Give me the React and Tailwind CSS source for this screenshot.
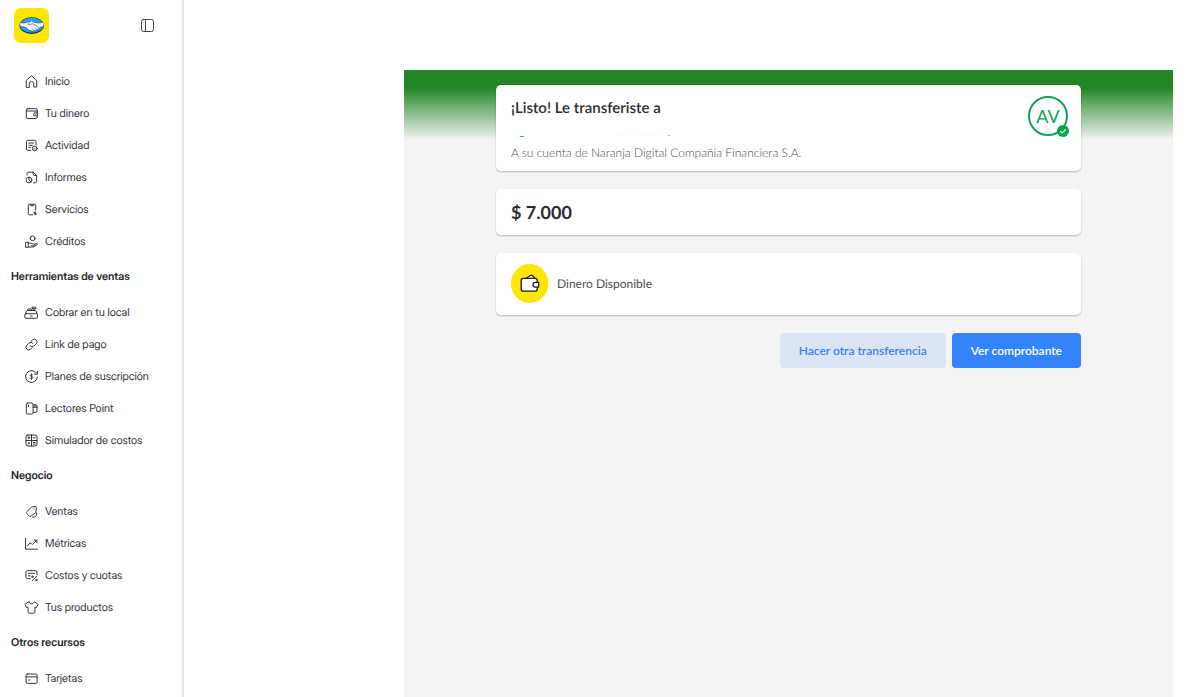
import React from 'react';

const Icon = ({ children }) => (
  <svg
    className="size-[15px] shrink-0"
    viewBox="0 0 15 15"
    fill="none"
    stroke="currentColor"
    strokeWidth="1"
    strokeLinecap="round"
    strokeLinejoin="round"
    aria-hidden="true"
  >
    {children}
  </svg>
);

const icons = {
  home: <path d="M2.3 13V6.4l5.200-4.600 5.200 4.600V13H9.7V9.700a2.200 2.200 0 0 0-4.400 0V13z" />,
  wallet: (
    <>
      <rect x="2.3" y="2.600" width="11" height="10" rx="1.600" />
      <path d="M2.300 5h11M13.300 6.900h-2.300a1.500 1.500 0 0 0 0 3h2.300" />
      <path d="M11.200 8.400h.1" />
    </>
  ),
  activity: (
    <>
      <path d="M12 6.800V3.600a1.300 1.300 0 0 0-1.300-1.300H3.800a1.300 1.300 0 0 0-1.300 1.300v7.500a1.300 1.300 0 0 0 1.300 1.300h3" />
      <path d="M4.800 5h5M4.800 7.300h3.400M4.800 9.600h1.600" />
      <circle cx="10.700" cy="10.400" r="2.400" />
      <path d="m9.800 10.500.7.600 1.100-1.200" strokeWidth=".8" />
    </>
  ),
  reports: (
    <>
      <path d="M3 5.200V3.500a1.300 1.300 0 0 1 1.300-1.300h5l3.300 3.300v6a1.300 1.300 0 0 1-1.300 1.300H9.600" />
      <path d="M9.200 2.200v2a1.300 1.300 0 0 0 1.300 1.300h2.100" />
      <circle cx="5" cy="10" r="2.900" />
      <path d="M5 7.300V10l2 1.800" />
    </>
  ),
  services: (
    <>
      <path d="M11.700 8V3.500a1.200 1.200 0 0 0-1.200-1.200h-5a1.200 1.200 0 0 0-1.200 1.200v8.100a1.200 1.200 0 0 0 1.200 1.200h3.200" />
      <path d="m6 2.400.6 1.200h2.900l.6-1.200" />
      <path d="M11.200 9.900v2.700M10.200 10.900l2 1" strokeWidth="1.300" />
    </>
  ),
  credits: (
    <>
      <circle cx="8.600" cy="4.300" r="2.400" />
      <path d="M2 8.300h2.300v5H2zM4.300 9h2l1.700.8h1.600a1 1 0 0 1 0 2H7.200M10.500 10.300l1.900-.8c1-.3 1.400.8.600 1.300l-3.400 2.200H4.300" />
    </>
  ),
  register: (
    <>
      <rect x=".9" y="8.700" width="12.600" height="4.600" rx="1" />
      <path d="m1.500 8.700 1-2.600a1 1 0 0 1 .9-.6h7.800a1 1 0 0 1 .9.600l.9 2.600M6.400 11h1.800M3.800 5.500V4h3.500v1.500" />
      <path d="M9.900 5.500V3.700M8.500 2.200h3.400v1.600H8.500z" />
    </>
  ),
  link: (
    <>
      <path d="M6.100 8.900a2.700 2.700 0 0 0 3.900.1l2.400-2.400a2.700 2.700 0 0 0-3.800-3.800L6.900 4.500" />
      <path d="M8.900 6.300a2.700 2.700 0 0 0-3.900-.1L2.600 8.600a2.700 2.700 0 0 0 3.800 3.800l1.700-1.700" />
    </>
  ),
  plans: (
    <>
      <path d="M13.400 8a5.900 5.900 0 1 1-1.800-4.700l1.500 1.500" />
      <path d="M13.400 2.200v2.900h-2.900" />
      <path d="M8.800 6C8.300 5.200 6.200 5.300 6.200 6.500c0 1.300 2.700.8 2.700 2.100 0 1.200-2.200 1.300-2.800.4M7.500 4.800v5.500" strokeWidth=".9" />
    </>
  ),
  point: (
    <>
      <rect x="2.300" y="2" width="6.800" height="11" rx="1.300" />
      <path d="M4.500 4.200v1.400M9.100 3.800h2.600a1.300 1.300 0 0 1 1.300 1.300v5a1.300 1.300 0 0 1-1.300 1.300H9.100M9.100 6.200H13M11 6.200V4" />
    </>
  ),
  simulator: (
    <>
      <rect x="2" y="2" width="11" height="11" rx="2" />
      <path d="M7.500 2v11M2 7.500h11M3.900 4.800h1.900M4.850 3.850v1.900M9.200 4.800h1.900M4.100 9.500l1.500 1.500M5.600 9.500l-1.500 1.500M9.200 9.500h1.900M9.200 11.100h1.900" />
    </>
  ),
  tag: (
    <>
      <path d="m11.900 8.100.5-4.300a1.200 1.200 0 0 0-1.300-1.300L8 2.900a1.500 1.500 0 0 0-.8.400L2.700 7.800a1.200 1.200 0 0 0 0 1.700l2.700 2.700a1.200 1.200 0 0 0 1.700 0z" />
      <path d="M9.900 5h.1M12.700 8.900v2l-2.200 2.200H8.700" />
    </>
  ),
  metrics: (
    <>
      <path d="M1.500 2.300v10.900h12" />
      <path d="M3.300 10.100 6 6.800l2.400 1.600 4.400-4.100M10.400 4.200h2.500v2.400" />
    </>
  ),
  fees: (
    <>
      <path d="M13 6.800V4.300a1.700 1.700 0 0 0-1.700-1.700H3.600a1.700 1.700 0 0 0-1.700 1.700V9a1.700 1.700 0 0 0 1.700 1.700h2.500" />
      <path d="M4.300 5.300h6.300M4.300 7.800H6M12.700 8.200l-4.400 4.500" />
      <circle cx="8.400" cy="8.800" r=".8" />
      <circle cx="12.400" cy="12" r=".8" />
    </>
  ),
  shirt: (
    <path d="M5.200 2h-.9L1.500 3.900a.8.800 0 0 0-.2 1.100l1.200 2.400h1.600v4.400a1.400 1.400 0 0 0 1.400 1.400h4a1.400 1.400 0 0 0 1.400-1.400V7.400h1.600L13.700 5a.8.800 0 0 0-.2-1.100L10.700 2h-.9c-.3 2.400-4.300 2.400-4.600 0z" />
  ),
  card: (
    <>
      <rect x="2.100" y="3" width="11" height="9.400" rx="1.300" />
      <path d="M2.100 5.900h11M4.700 9h1.200" />
    </>
  ),
};

const sections = [
  {
    id: 'main',
    items: [
      { label: 'Inicio', icon: 'home' },
      { label: 'Tu dinero', icon: 'wallet' },
      { label: 'Actividad', icon: 'activity' },
      { label: 'Informes', icon: 'reports' },
      { label: 'Servicios', icon: 'services' },
      { label: 'Créditos', icon: 'credits' },
    ],
  },
  {
    id: 'sales',
    title: 'Herramientas de ventas',
    items: [
      { label: 'Cobrar en tu local', icon: 'register' },
      { label: 'Link de pago', icon: 'link' },
      { label: 'Planes de suscripción', icon: 'plans' },
      { label: 'Lectores Point', icon: 'point' },
      { label: 'Simulador de costos', icon: 'simulator' },
    ],
  },
  {
    id: 'business',
    title: 'Negocio',
    items: [
      { label: 'Ventas', icon: 'tag' },
      { label: 'Métricas', icon: 'metrics' },
      { label: 'Costos y cuotas', icon: 'fees' },
      { label: 'Tus productos', icon: 'shirt' },
    ],
  },
  {
    id: 'other',
    title: 'Otros recursos',
    items: [{ label: 'Tarjetas', icon: 'card' }],
  },
];

const Logo = () => (
  <svg className="size-[35px]" viewBox="0 0 35 35" aria-hidden="true">
    <rect width="35" height="35" rx="7" fill="#ffe600" />
    <ellipse cx="17.700" cy="17.600" rx="12.200" ry="8.300" fill="#14196b" />
    <ellipse cx="17.700" cy="17.300" rx="11.500" ry="7.500" fill="#1ba8ec" />
    <path
      d="M6.400 14.600c3 .9 5.700.3 8.100-.8 1.400-.6 2.900-.5 4.200 0 2.700 1.100 6.400 1.700 10.300.5.700 1.700.5 3.200 0 4.300-1.600.2-2.800.8-3.800 1.600-.6 1.300-1.700 1.700-2.700 1.500-.7 1-1.700 1.300-2.600.9-.9.900-2.400.9-3.200 0-1 .2-1.800-.3-2.100-1.100-1.200.1-1.900-.5-1.900-1.400-1.500-.9-3.500-1.500-6-1.700-.5-1.300-.7-2.600-.3-3.800z"
      fill="#fff"
    />
    <path
      d="M6.500 14.600c3 .9 5.700.3 8-.8l2-.3-2.600 2.900c1.500.8 2.900.2 4-.9 1.300.1 4.500 2.300 7.100 4.600M6.700 18.400c2.500.2 4.500.8 6 1.700M18.700 13.800c2.700 1.100 6.400 1.700 10.200.5M28.800 18.600c-1.500.2-2.600.8-3.600 1.600-.6 1.300-1.700 1.700-2.700 1.500-.7 1-1.700 1.300-2.600.9-.9.900-2.400.9-3.200 0-1 .2-1.800-.3-2.100-1.100-1.200.1-1.900-.5-1.900-1.400M20.800 19.500l1.700 2.100M18.600 20.700l1.200 1.700"
      fill="none"
      stroke="#14196b"
      strokeWidth=".55"
    />
  </svg>
);

const Sidebar = () => (
  <aside className="w-[184px] shrink-0 overflow-hidden border-r-2 border-[#e5e5ea] bg-white font-['Inter_Display','Inter',sans-serif]">
    <div className="flex items-start justify-between pt-2 pr-[27px] pl-[14px]">
      <a href="#" aria-label="Mercado Pago">
        <Logo />
      </a>
      <button type="button" aria-label="Contraer menú" className="mt-2.5 text-[#454550]">
        <Icon>
          <rect x="1.500" y="1.500" width="12" height="12" rx="2" />
          <path d="M5.500 1.500v12" />
        </Icon>
      </button>
    </div>
    <nav className="pt-[22px]">
      {sections.map((section) => (
        <section key={section.id}>
          {section.title && (
            <h2 className="flex h-[39px] items-center pl-[11px] text-[11px] font-semibold text-[#25252d]">
              {section.title}
            </h2>
          )}
          <ul>
            {section.items.map((item) => (
              <li key={item.label}>
                <a href="#" className="flex h-8 items-center gap-1.5 pl-6 text-[11px] text-[#33333d]">
                  <Icon>{icons[item.icon]}</Icon>
                  {item.label}
                </a>
              </li>
            ))}
          </ul>
        </section>
      ))}
    </nav>
  </aside>
);

const Card = ({ className, children }) => (
  <section className={`rounded-[5px] bg-white pl-[15px] shadow-[0_1px_2px_rgba(0,0,0,0.25)] ${className}`}>
    {children}
  </section>
);

const Avatar = () => (
  <div className="relative flex size-10 items-center justify-center rounded-full border-2 border-[#12a05a] text-lg text-[#12a05a]">
    AV
    <svg className="absolute -right-1 -bottom-1 size-[14px]" viewBox="0 0 14 14" aria-hidden="true">
      <circle cx="7" cy="7" r="6" fill="#00a650" />
      <path d="m4.300 7.100 1.900 1.800 3.500-3.500" fill="none" stroke="#fff" strokeWidth="1.300" />
    </svg>
  </div>
);

const App = () => {
  return (
    <div className="flex h-screen bg-white [text-rendering:geometricPrecision]">
      <Sidebar />
      <main className="flex flex-1 pt-[70px] pr-[27px] pl-[220px] font-['Lato',sans-serif]">
        <div className="flex flex-1 flex-col gap-[18px] bg-[#f4f4f4] bg-[linear-gradient(#238726_18px,#f4f4f4_70px)] px-[92px] pt-[15px]">
          <Card className="flex justify-between pt-[11px] pr-[13px] pb-2">
            <div>
              <h1 className="text-[15px] leading-6 font-semibold text-[#2b2b2b]">¡Listo! Le transferiste a</h1>
              <svg className="h-[23px] w-[170px]" viewBox="0 0 170 23" aria-hidden="true">
                <path d="M9 16.500h4" stroke="#3bab74" />
                <path d="M157 15.500h1.500" stroke="#6fc2a0" />
                <path d="M105 14.500h8M119 14.500h3M128 14.500h20" stroke="#f2faf6" />
              </svg>
              <p className="text-xs leading-5 font-light text-[#4d4d4d]">
                A su cuenta de Naranja Digital Compañia Financiera S.A.
              </p>
            </div>
            <Avatar />
          </Card>

          <Card className="py-[11px]">
            <p className="text-lg leading-6 font-bold text-[#2a2a33]">$ 7.000</p>
          </Card>

          <Card className="flex items-center gap-2 pt-[11px] pb-3">
            <svg className="h-[39px] w-[38px]" viewBox="0 0 38 39" aria-hidden="true">
              <ellipse cx="18.700" cy="19.500" rx="18.700" ry="19.500" fill="#ffe600" />
              <g fill="#fff" stroke="#1d1d1d" strokeWidth="1.300" strokeLinejoin="round">
                <path d="m15 14.500 4.500-3q1.300-.8 2.300.4l2.200 2.600" />
                <rect x="10.200" y="14.400" width="16" height="12.800" rx="2.200" />
                <path d="M27.600 18.300h-3.200a2.400 2.400 0 0 0 0 4.800h3.200z" />
              </g>
            </svg>
            <p className="text-xs text-[#4d4d4d]">Dinero Disponible</p>
          </Card>

          <div className="flex justify-end gap-1.5 text-xs font-semibold">
            <button type="button" className="h-[35px] rounded bg-[#dbe4f3] px-[19px] text-[#3d7fe8]">
              Hacer otra transferencia
            </button>
            <button type="button" className="h-[35px] rounded bg-[#3483fa] px-[19px] text-white">
              Ver comprobante
            </button>
          </div>
        </div>
      </main>
    </div>
  );
};

export default App;
